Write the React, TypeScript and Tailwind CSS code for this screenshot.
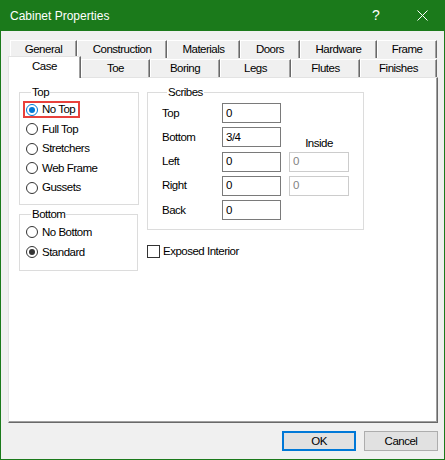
import React from "react";

function Tab({ label, w }: { label: string; w: string }) {
  return (
    <div
      className={`${w} h-full flex items-center justify-center bg-[#f0f0f0] border-t border-l border-white border-r border-r-[#696969] shadow-[inset_-1px_0_#a0a0a0]`}
    >
      {label}
    </div>
  );
}

function Radio({
  label,
  checked = false,
  focused = false,
}: {
  label: string;
  checked?: boolean;
  focused?: boolean;
}) {
  const dot = (
    <span
      className={`w-[12px] h-[12px] rounded-full border bg-white flex items-center justify-center shrink-0 ${
        focused ? "border-[#0078d7]" : "border-[#333333]"
      }`}
    >
      {checked && (
        <span
          className={`w-[6px] h-[6px] rounded-full ${
            focused ? "bg-[#0078d7]" : "bg-[#333333]"
          }`}
        />
      )}
    </span>
  );

  if (focused) {
    return (
      <div className="h-[19.5px] flex items-center">
        <div className="-ml-[3px] h-[17px] w-[57px] border-2 border-[#e8413c] pl-[1px] flex items-center gap-[4px]">
          {dot}
          <span>{label}</span>
        </div>
      </div>
    );
  }

  return (
    <div className="h-[19.5px] flex items-center gap-[4px]">
      {dot}
      <span>{label}</span>
    </div>
  );
}

function Field({ value, disabled = false }: { value: string; disabled?: boolean }) {
  return (
    <div
      className={`h-[20px] bg-white border pl-[3px] flex items-center ${
        disabled ? "w-[60px] justify-self-end border-[#cccccc] text-[#838383]" : "w-[59px] border-[#7a7a7a]"
      }`}
    >
      {value}
    </div>
  );
}

export default function App() {
  return (
    <div className="w-[445px] h-[460px] flex flex-col bg-[#1b7a1b] [font-family:'Liberation_Sans',Arial,sans-serif]">
      {/* TITLE BAR */}
      <div className="h-[31px] shrink-0 flex items-center text-white text-[12px]">
        <span className="flex-1 pl-[10px]">Cabinet Properties</span>
        <span className="w-[46px] text-center text-[14px]">?</span>
        <span className="w-[46px] flex justify-center">
          <svg width="11" height="11" viewBox="0 0 11 11">
            <path d="M0.5 0.5L10.5 10.5M10.5 0.5L0.5 10.5" stroke="white" strokeWidth="1" />
          </svg>
        </span>
      </div>

      {/* BODY */}
      <div className="flex-1 mx-[1px] mb-[1px] bg-[#f0f0f0] pt-[9px] pl-[7px] text-[11.5px] tracking-[-0.5px] text-black leading-[13px]">
        {/* tab rows */}
        <div className="flex h-[18px] ml-[2px]">
          <Tab label="General" w="w-[67px]" />
          <Tab label="Construction" w="w-[90px]" />
          <Tab label="Materials" w="w-[73px]" />
          <Tab label="Doors" w="w-[60px]" />
          <Tab label="Hardware" w="w-[77px]" />
          <Tab label="Frame" w="w-[60px]" />
        </div>
        <div className="flex h-[19px] items-start">
          <div className="relative z-10 w-[73px] h-[22px] -mt-[2px] pb-[3px] flex items-center justify-center bg-white border-t border-l border-[#e3e3e3] border-r border-r-[#696969] shadow-[inset_-1px_0_#a0a0a0]">
            Case
          </div>
          <div className="flex h-[18px] mt-[1px]">
            <Tab label="Toe" w="w-[69px]" />
            <Tab label="Boring" w="w-[70px]" />
            <Tab label="Legs" w="w-[71px]" />
            <Tab label="Flutes" w="w-[69px]" />
            <Tab label="Finishes" w="w-[77px]" />
          </div>
        </div>

        {/* PANEL */}
        <div className="w-[430px] h-[346px] bg-white border-l border-t border-[#e3e3e3] border-r border-b border-r-[#696969] border-b-[#696969] shadow-[inset_-1px_-1px_#a0a0a0] pt-[8px] pl-[10px] flex items-start">
          {/* left column */}
          <div className="flex flex-col">
            <fieldset className="w-[120px] border border-[#dcdcdc] pt-[1px] pl-[6px] pb-[6px]">
              <legend className="ml-[5px] px-[1px]">Top</legend>
              <Radio label="No Top" checked focused />
              <Radio label="Full Top" />
              <Radio label="Stretchers" />
              <Radio label="Web Frame" />
              <Radio label="Gussets" />
            </fieldset>

            <fieldset className="w-[119px] mt-[3px] border border-[#dcdcdc] pt-[1.5px] pl-[6px] pb-[8px]">
              <legend className="ml-[5px] px-[1px]">Bottom</legend>
              <div className="h-[20px] flex items-center gap-[4px]">
                <span className="w-[12px] h-[12px] rounded-full border border-[#333333] bg-white" />
                <span>No Bottom</span>
              </div>
              <div className="h-[20px] flex items-center gap-[4px]">
                <span className="w-[12px] h-[12px] rounded-full border border-[#333333] bg-white flex items-center justify-center">
                  <span className="w-[6px] h-[6px] rounded-full bg-[#333333]" />
                </span>
                <span>Standard</span>
              </div>
            </fieldset>
          </div>

          {/* right column */}
          <div className="ml-[8px] flex flex-col">
            <fieldset className="w-[217px] border border-[#dcdcdc] pt-[4px] pl-[14px] pb-[9px]">
              <legend className="ml-[5px] px-[1px]">Scribes</legend>
              <div className="grid grid-cols-[60px_59px_68px] gap-y-[4.25px]">
                <div className="flex items-center">Top</div>
                <Field value="0" />
                <div />

                <div className="flex items-center">Bottom</div>
                <Field value="3/4" />
                <div className="flex items-end justify-center pl-[8px] -mb-[3px]">Inside</div>

                <div className="flex items-center">Left</div>
                <Field value="0" />
                <Field value="0" disabled />

                <div className="flex items-center">Right</div>
                <Field value="0" />
                <Field value="0" disabled />

                <div className="flex items-center">Back</div>
                <Field value="0" />
                <div />
              </div>
            </fieldset>

            <div className="mt-[15px] flex items-center gap-[3px]">
              <span className="w-[13px] h-[13px] border border-[#333333] bg-white" />
              <span>Exposed Interior</span>
            </div>
          </div>
        </div>

        {/* BUTTONS */}
        <div className="mt-[8px] pr-[6px] flex justify-end gap-[8px]">
          <div className="w-[74px] h-[20px] border-2 border-[#0078d7] bg-[#e1e1e1] flex items-center justify-center">
            OK
          </div>
          <div className="w-[74px] h-[20px] border border-[#adadad] bg-[#e1e1e1] flex items-center justify-center">
            Cancel
          </div>
        </div>
      </div>
    </div>
  );
}
